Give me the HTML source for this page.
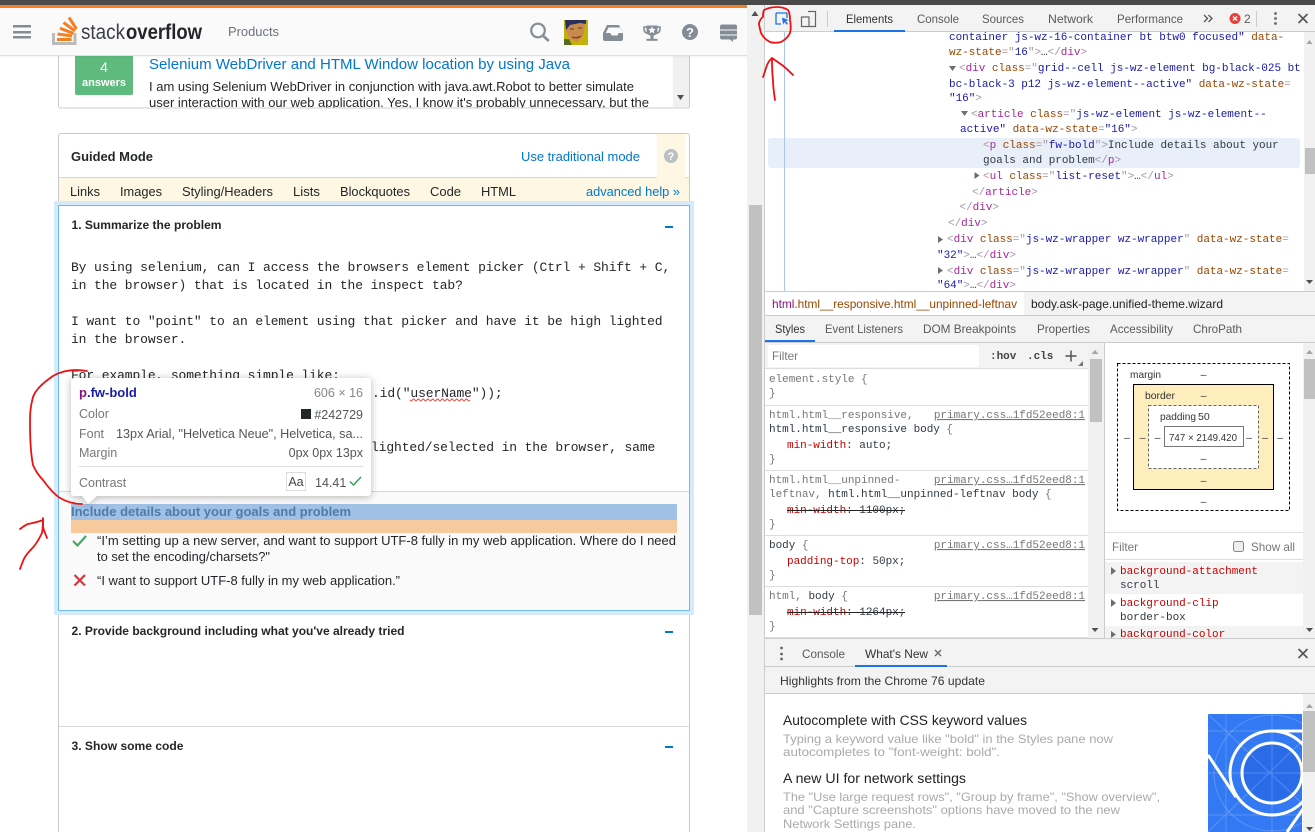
<!DOCTYPE html>
<html lang="en"><head><meta charset="utf-8"><title>Stack Overflow with DevTools</title>
<style>
html,body{margin:0;padding:0;background:#fff;width:1315px;height:832px;overflow:hidden}
svg{display:block}
text{font-family:"Liberation Sans",Arial,sans-serif;white-space:pre}
.m,.m13{font-family:"Liberation Mono","DejaVu Sans Mono",monospace}
.m{font-size:11px;fill:#303942;transform:translateY(-1px);letter-spacing:-.03px}
.m13{font-size:13px;fill:#242729;letter-spacing:-.12px}
.d{font-size:12px;fill:#5a5a5a}
.t{fill:#a6279a}.a{fill:#994500}.v{fill:#1a1aa6}.b{fill:#a894a6}
.g{fill:#777}.r{fill:#c80000}.l{fill:#777;text-decoration:underline}
.k{fill:#222}
.p{font-size:13px;fill:#3b4045}
.q{font-size:13px;fill:#6a737c}
.h{font-size:12px;fill:#aaa}
.hd{font-size:13.5px;fill:#222}
</style></head><body>
<svg xmlns="http://www.w3.org/2000/svg" width="1315" height="832" viewBox="0 0 1315 832">
<rect width="1315" height="832" fill="#fff"/>

<!-- LEFT PAGE: preview box -->
<rect x="58.500" y="40" width="631" height="68" rx="2" fill="#fff" stroke="#c8ccd0"/>
<rect x="673" y="55" width="16" height="52" fill="#f1f1f1"/>
<path d="M677 95h7l-3.500 5z" fill="#505050"/>
<rect x="75" y="50" width="58" height="45" rx="2" fill="#5eba7d"/>
<text x="104" y="72" font-size="14" fill="#fff" text-anchor="middle">4</text>
<text x="104" y="86" font-size="11" font-weight="bold" fill="#fff" text-anchor="middle">answers</text>
<text x="149" y="69" font-size="14.500" fill="#0077cc" textLength="421" lengthAdjust="spacingAndGlyphs">Selenium WebDriver and HTML Window location by using Java</text>
<text x="149" y="91" font-size="13" fill="#242729" textLength="485" lengthAdjust="spacingAndGlyphs">I am using Selenium WebDriver in conjunction with java.awt.Robot to better simulate</text>
<text x="149" y="107" font-size="13" fill="#242729" textLength="500" lengthAdjust="spacingAndGlyphs">user interaction with our web application. Yes, I know it's probably unnecessary, but the</text>
<rect x="59" y="108" width="630" height="4" fill="#fff"/>
<path d="M59 108H689" stroke="#c8ccd0"/>

<!-- Guided box -->
<rect x="58.500" y="133.500" width="631" height="720" rx="2" fill="#fff" stroke="#c8ccd0"/>
<rect x="657" y="134" width="28" height="44" fill="#fdf7e3"/>
<path d="M59 177.500H657M685 177.500H689" stroke="#d6d9dc"/>
<text x="71" y="161" font-size="13" font-weight="bold" fill="#242729" textLength="82" lengthAdjust="spacingAndGlyphs">Guided Mode</text>
<text x="521" y="161" font-size="13" fill="#0077cc" textLength="119" lengthAdjust="spacingAndGlyphs">Use traditional mode</text>
<circle cx="671" cy="156" r="7" fill="#bbc0c4"/>
<text x="671" y="160" font-size="11" font-weight="bold" fill="#fff" text-anchor="middle">?</text>
<rect x="59" y="178" width="630" height="24" fill="#fdf7e3"/>
<g font-size="13" fill="#242729">
<text x="70" y="196" textLength="30" lengthAdjust="spacingAndGlyphs">Links</text>
<text x="120" y="196" textLength="42" lengthAdjust="spacingAndGlyphs">Images</text>
<text x="182" y="196" textLength="91" lengthAdjust="spacingAndGlyphs">Styling/Headers</text>
<text x="293" y="196" textLength="27" lengthAdjust="spacingAndGlyphs">Lists</text>
<text x="340" y="196" textLength="70" lengthAdjust="spacingAndGlyphs">Blockquotes</text>
<text x="430" y="196" textLength="31" lengthAdjust="spacingAndGlyphs">Code</text>
<text x="481" y="196" textLength="35" lengthAdjust="spacingAndGlyphs">HTML</text>
</g>
<text x="586" y="196" font-size="13" fill="#0077cc" textLength="94" lengthAdjust="spacingAndGlyphs">advanced help »</text>

<!-- Focus section -->
<rect x="54" y="201" width="640" height="414" fill="#d6eafb"/>
<rect x="58.500" y="205.500" width="631" height="405" fill="#fff" stroke="#6bbbf7"/>
<text x="71.500" y="229" font-size="12" font-weight="bold" fill="#242729" textLength="150" lengthAdjust="spacingAndGlyphs">1. Summarize the problem</text>
<rect x="665" y="226" width="8" height="2" fill="#0077cc"/>
<g>
<text class="m13" x="71" y="271">By using selenium, can I access the browsers element picker (Ctrl + Shift + C,</text>
<text class="m13" x="71" y="289">in the browser) that is located in the inspect tab?</text>
<text class="m13" x="71" y="325">I want to "point" to an element using that picker and have it be high lighted</text>
<text class="m13" x="71" y="343">in the browser.</text>
<text class="m13" x="71" y="379">For example, something simple like:</text>
<text class="m13" x="372" y="397">.id("userName"));</text>
<text class="m13" x="371" y="451">lighted/selected in the browser, same</text>
</g>
<path d="M410 400q1.200 2 2.400 0t2.400 0 2.400 0 2.400 0 2.400 0 2.400 0 2.400 0 2.400 0 2.400 0 2.400 0 2.400 0 2.400 0 2.400 0 2.400 0 2.400 0 2.400 0 2.400 0 2.400 0 2.400 0 2.400 0 2.400 0 2.400 0 2.400 0 2.400 0 2.400 0" fill="none" stroke="#e0443e" stroke-width="1"/>

<!-- Lower active area -->
<rect x="59" y="491" width="630" height="119" fill="#fafafb"/>
<path d="M59 491.500H689" stroke="#d6d9dc"/>
<rect x="71" y="504" width="606" height="16" fill="#9fc1e6"/>
<rect x="71" y="520" width="606" height="13" fill="#f6ca9c"/>
<text x="71" y="516" font-size="13" font-weight="bold" fill="#4f7ba8" textLength="280" lengthAdjust="spacingAndGlyphs">Include details about your goals and problem</text>
<path d="M73 541l4.500 4.500L86 536" fill="none" stroke="#48a868" stroke-width="2.200"/>
<text x="97" y="545" font-size="13" fill="#242729" textLength="579" lengthAdjust="spacingAndGlyphs">“I’m setting up a new server, and want to support UTF-8 fully in my web application. Where do I need</text>
<text x="97" y="561" font-size="13" fill="#242729" textLength="173" lengthAdjust="spacingAndGlyphs">to set the encoding/charsets?"</text>
<path d="M74.500 575l10.500 10.500M85 575l-10.500 10.500" fill="none" stroke="#d1383d" stroke-width="2.200"/>
<text x="97" y="585" font-size="13" fill="#242729" textLength="303" lengthAdjust="spacingAndGlyphs">“I want to support UTF-8 fully in my web application.”</text>

<text x="71.500" y="635" font-size="12" font-weight="bold" fill="#242729" textLength="333" lengthAdjust="spacingAndGlyphs">2. Provide background including what you've already tried</text>
<rect x="665" y="631" width="8" height="2" fill="#0077cc"/>
<path d="M59 726.500H689" stroke="#d6d9dc"/>
<text x="71.500" y="750" font-size="12" font-weight="bold" fill="#242729" textLength="112" lengthAdjust="spacingAndGlyphs">3. Show some code</text>
<rect x="665" y="746" width="8" height="2" fill="#0077cc"/>

<!-- Tooltip -->
<g>
<g style="filter:drop-shadow(0 1px 4px rgba(0,0,0,.28))">
<path d="M74 378H368a3 3 0 0 1 3 3V493a3 3 0 0 1-3 3H97l-9 8-6-8H74a3 3 0 0 1-3-3V381a3 3 0 0 1 3-3z" fill="#fff"/>
</g>
<text x="79" y="397" font-size="13" font-weight="bold"><tspan fill="#881280">p</tspan><tspan fill="#1a1aa6">.fw-bold</tspan></text>
<text x="363" y="397" font-size="12.500" fill="#888" text-anchor="end">606 × 16</text>
<text x="79" y="418" font-size="12.500" fill="#777">Color</text>
<rect x="301" y="409" width="10" height="10" fill="#242729"/>
<text x="363" y="419" font-size="12.500" fill="#555" text-anchor="end">#242729</text>
<text x="79" y="438" font-size="12.500" fill="#777">Font</text>
<text x="116" y="438" font-size="12.500" fill="#555" textLength="247" lengthAdjust="spacingAndGlyphs">13px Arial, "Helvetica Neue", Helvetica, sa...</text>
<text x="79" y="457" font-size="12.500" fill="#777">Margin</text>
<text x="363" y="457" font-size="12.500" fill="#555" text-anchor="end">0px 0px 13px</text>
<path d="M79 466.500H363" stroke="#ddd"/>
<text x="79" y="487" font-size="12.500" fill="#777">Contrast</text>
<rect x="286.500" y="472.500" width="19" height="18" fill="#fff" stroke="#ddd"/>
<text x="296" y="486" font-size="12.500" fill="#444" text-anchor="middle">Aa</text>
<text x="315" y="487" font-size="12.500" fill="#555">14.41</text>
<path d="M350 481.500l3.500 3.500L361 477" fill="none" stroke="#1f9e3c" stroke-width="1.300"/>
</g>

<!-- Header -->
<rect x="0" y="8" width="747" height="47" fill="#fafafb"/>
<rect x="0" y="55" width="747" height="1" fill="#dcdee0"/>
<rect x="0" y="56" width="747" height="1.500" fill="#000" opacity=".03"/>
<rect x="0" y="5" width="747" height="3" fill="#f48024"/>
<g fill="#848d95"><rect x="13" y="25" width="18" height="2.500"/><rect x="13" y="31" width="18" height="2.500"/><rect x="13" y="36" width="18" height="2.500"/></g>
<path d="M53.500 33v10.500H75V33" fill="none" stroke="#bcbbbb" stroke-width="3"/>
<g stroke="#f48024" stroke-width="3" fill="none">
<path d="M57 39.500H71.500"/><path d="M57.500 34l14.500 2"/><path d="M60 28.200l13.500 5.300"/><path d="M63.500 22.500l11.500 8.500"/><path d="M69 17.500l7.500 11.500"/>
</g>
<text x="81" y="39" font-size="21" fill="#3c4146" textLength="44" lengthAdjust="spacingAndGlyphs">stack</text>
<text x="126" y="39" font-size="21" font-weight="bold" fill="#242729" textLength="76" lengthAdjust="spacingAndGlyphs">overflow</text>
<text x="228" y="36" font-size="13" fill="#6a737c" textLength="51" lengthAdjust="spacingAndGlyphs">Products</text>
<g fill="none" stroke="#848d95" stroke-width="2.200"><circle cx="538" cy="30.500" r="6.800"/><path d="M542.800 35.500l6 5.500" stroke-width="2.600"/></g>
<rect x="564" y="20" width="24" height="25" fill="#c4b10c"/>
<path d="M567 21h17l1 5-2 10-6 6-7-3-4-8z" fill="#c98a4e"/>
<path d="M565 20h21v4l-6-1-10 2-4 5z" fill="#27305c"/>
<path d="M572 37q5 2 9-1" stroke="#8a3a2d" stroke-width="1.300" fill="none"/>
<path d="M570 29h4M578 28h4" stroke="#5a3a20" stroke-width="1"/>
<path d="M564 39h5l3 6h-8z" fill="#5a6a20"/>
<path d="M607 25h12l4 8v6a2 2 0 0 1-2 2h-16a2 2 0 0 1-2-2v-6zM608.500 27.500l-2.700 5.500h4.400l1.500 2.500h5.600l1.500-2.500h4.400l-2.700-5.500z" fill="#848d95" fill-rule="evenodd"/>
<path d="M646.500 25.500h11v5c0 3-2.500 5.500-5.500 5.500s-5.500-2.500-5.500-5.500z" fill="#848d95"/>
<path d="M647 27h-3v2c0 2.800 2 4.500 4.500 4.500M657 27h3v2c0 2.800-2 4.500-4.500 4.500" fill="none" stroke="#848d95" stroke-width="1.600"/>
<rect x="650.500" y="36" width="3" height="3" fill="#848d95"/>
<rect x="646.500" y="38.800" width="11" height="2" fill="#848d95"/>
<path d="M652 26.500l1.100 2.300 2.500.3-1.800 1.800.5 2.500-2.300-1.300-2.300 1.300.5-2.500-1.800-1.800 2.500-.3z" fill="#fafafb"/>
<circle cx="690" cy="32" r="8" fill="#848d95"/>
<text x="690" y="37" font-size="13" font-weight="bold" fill="#fafafb" text-anchor="middle">?</text>
<path d="M722 24.500h13a2 2 0 0 1 2 2v3h-17v-3a2 2 0 0 1 2-2zM720 30.500h17v4h-17zM720 35.500h17v2a2 2 0 0 1-2 2h-2v2.500l-3-2.500h-8a2 2 0 0 1-2-2z" fill="#848d95"/>

<!-- Left scrollbar -->
<rect x="747" y="5" width="17" height="827" fill="#f1f1f1"/>
<path d="M751.500 16l3.500-5 3.500 5z" fill="#505050"/>
<rect x="749" y="205" width="13" height="410" fill="#c1c1c1"/>

<!-- Top dark strip -->
<rect x="0" y="0" width="1315" height="5" fill="#4a4a4a"/>

<!-- DEVTOOLS -->
<rect x="764" y="5" width="551" height="827" fill="#fff"/>
<path d="M764.500 5V832" stroke="#ccc"/>
<rect x="765" y="5" width="550" height="27" fill="#f3f3f3"/>
<path d="M765 31.500H1315" stroke="#ccc"/>
<path d="M776 13h11M776 13v11h5M787 13v5" fill="none" stroke="#1a73e8" stroke-width="1.300"/>
<path d="M782 17.500l6.500 2.500-2.700 1.100 2.200 2.600-1.200 1-2.200-2.600-1.500 2.400z" fill="#1a73e8"/>
<path d="M808 11.500h7.500v15h-7.500M801.500 17h7.500v9.500h-7.500z" fill="none" stroke="#666" stroke-width="1.200"/>
<path d="M827.500 11V27" stroke="#ccc"/>
<g>
<text class="d" x="846" y="23" textLength="47" lengthAdjust="spacingAndGlyphs" style="fill:#333">Elements</text>
<text class="d" x="917" y="23" textLength="42" lengthAdjust="spacingAndGlyphs">Console</text>
<text class="d" x="982" y="23" textLength="42" lengthAdjust="spacingAndGlyphs">Sources</text>
<text class="d" x="1048" y="23" textLength="45" lengthAdjust="spacingAndGlyphs">Network</text>
<text class="d" x="1117" y="23" textLength="66" lengthAdjust="spacingAndGlyphs">Performance</text>
</g>
<rect x="834" y="30" width="71" height="2" fill="#1a73e8"/>
<path d="M1204 15l3.500 3.500-3.500 3.500M1208.500 15l3.500 3.500-3.500 3.500" fill="none" stroke="#555" stroke-width="1.300"/>
<circle cx="1235" cy="18.500" r="5.500" fill="#e8413c"/>
<path d="M1233 16.500l4 4M1237 16.500l-4 4" stroke="#fff" stroke-width="1.300"/>
<text class="d" x="1244" y="23">2</text>
<path d="M1256.500 11V27" stroke="#ccc"/>
<g fill="#666"><circle cx="1275.500" cy="13.500" r="1.400"/><circle cx="1275.500" cy="18.500" r="1.400"/><circle cx="1275.500" cy="23.500" r="1.400"/></g>
<path d="M1298.500 14l9 9M1307.500 14l-9 9" stroke="#555" stroke-width="1.600"/>

<!-- Elements tree -->
<rect x="1304" y="32" width="11" height="260" fill="#f1f1f1"/>
<path d="M1306.500 44l3-4 3 4z" fill="#a3a3a3"/>
<rect x="1305" y="148" width="10" height="26" fill="#c1c1c1"/>
<path d="M1306 280h7l-3.500 4z" fill="#505050"/>
<path d="M784.500 32V292" stroke="#a8c7f0"/>
<rect x="768" y="138" width="532" height="30" rx="3" fill="#e8eff9"/>
<path d="M784.500 138V168" stroke="#a8c7f0"/>
<g>
<text class="m" x="949" y="41"><tspan class="v">container js-wz-16-container bt btw0 focused"</tspan><tspan class="a"> data-</tspan></text>
<text class="m" x="949" y="56"><tspan class="a">wz-state</tspan><tspan class="b">="</tspan><tspan class="v">16</tspan><tspan class="b">"&gt;</tspan>…<tspan class="b">&lt;/</tspan><tspan class="t">div</tspan><tspan class="b">&gt;</tspan></text>
<path d="M949 66h7l-3.500 5z" fill="#6e6e6e"/>
<text class="m" x="959" y="72"><tspan class="b">&lt;</tspan><tspan class="t">div</tspan> <tspan class="a">class</tspan><tspan class="b">="</tspan><tspan class="v">grid--cell js-wz-element bg-black-025 bt</tspan></text>
<text class="m" x="949" y="88"><tspan class="v">bc-black-3 p12 js-wz-element--active"</tspan> <tspan class="a">data-wz-state</tspan><tspan class="b">=</tspan></text>
<text class="m" x="949" y="102"><tspan class="v">"16"</tspan><tspan class="b">&gt;</tspan></text>
<path d="M961 111h7l-3.500 5z" fill="#6e6e6e"/>
<text class="m" x="971" y="118"><tspan class="b">&lt;</tspan><tspan class="t">article</tspan> <tspan class="a">class</tspan><tspan class="b">="</tspan><tspan class="v">js-wz-element js-wz-element--</tspan></text>
<text class="m" x="960" y="133"><tspan class="v">active"</tspan> <tspan class="a">data-wz-state</tspan><tspan class="b">=</tspan><tspan class="v">"16"</tspan><tspan class="b">&gt;</tspan></text>
<text class="m" x="983" y="149"><tspan class="b">&lt;</tspan><tspan class="t">p</tspan> <tspan class="a">class</tspan><tspan class="b">="</tspan><tspan class="v">fw-bold</tspan><tspan class="b">"&gt;</tspan>Include details about your</text>
<text class="m" x="983" y="164">goals and problem<tspan class="b">&lt;/</tspan><tspan class="t">p</tspan><tspan class="b">&gt;</tspan></text>
<path d="M974.500 172v7l5-3.500z" fill="#6e6e6e"/>
<text class="m" x="983" y="180"><tspan class="b">&lt;</tspan><tspan class="t">ul</tspan> <tspan class="a">class</tspan><tspan class="b">="</tspan><tspan class="v">list-reset</tspan><tspan class="b">"&gt;</tspan>…<tspan class="b">&lt;/</tspan><tspan class="t">ul</tspan><tspan class="b">&gt;</tspan></text>
<text class="m" x="972" y="196"><tspan class="b">&lt;/</tspan><tspan class="t">article</tspan><tspan class="b">&gt;</tspan></text>
<text class="m" x="959.500" y="211"><tspan class="b">&lt;/</tspan><tspan class="t">div</tspan><tspan class="b">&gt;</tspan></text>
<text class="m" x="948" y="227"><tspan class="b">&lt;/</tspan><tspan class="t">div</tspan><tspan class="b">&gt;</tspan></text>
<path d="M938 236v7l5-3.500z" fill="#6e6e6e"/>
<text class="m" x="947" y="243"><tspan class="b">&lt;</tspan><tspan class="t">div</tspan> <tspan class="a">class</tspan><tspan class="b">="</tspan><tspan class="v">js-wz-wrapper wz-wrapper</tspan><tspan class="b">"</tspan> <tspan class="a">data-wz-state</tspan><tspan class="b">=</tspan></text>
<text class="m" x="937" y="259"><tspan class="v">"32"</tspan><tspan class="b">&gt;</tspan>…<tspan class="b">&lt;/</tspan><tspan class="t">div</tspan><tspan class="b">&gt;</tspan></text>
<path d="M938 267v7l5-3.500z" fill="#6e6e6e"/>
<text class="m" x="947" y="275"><tspan class="b">&lt;</tspan><tspan class="t">div</tspan> <tspan class="a">class</tspan><tspan class="b">="</tspan><tspan class="v">js-wz-wrapper wz-wrapper</tspan><tspan class="b">"</tspan> <tspan class="a">data-wz-state</tspan><tspan class="b">=</tspan></text>
<text class="m" x="937" y="289"><tspan class="v">"64"</tspan><tspan class="b">&gt;</tspan>…<tspan class="b">&lt;/</tspan><tspan class="t">div</tspan><tspan class="b">&gt;</tspan></text>
</g>

<!-- Breadcrumbs -->
<rect x="765" y="292" width="550" height="23" fill="#f3f3f3"/>
<path d="M765 291.500H1315M765 315.500H1315" stroke="#ccc"/>
<rect x="765" y="292" width="259" height="23" fill="#fff"/>
<text x="772" y="308" font-size="12" textLength="245" lengthAdjust="spacingAndGlyphs"><tspan fill="#881280">html</tspan><tspan fill="#994500">.html__responsive.html__unpinned-leftnav</tspan></text>
<text x="1031" y="308" font-size="12" fill="#222" textLength="192" lengthAdjust="spacingAndGlyphs">body.ask-page.unified-theme.wizard</text>

<!-- Styles tabs -->
<rect x="765" y="316" width="550" height="26" fill="#f3f3f3"/>
<path d="M765 342.500H1315" stroke="#ccc"/>
<text class="d" x="775" y="333" textLength="30" lengthAdjust="spacingAndGlyphs" style="fill:#333">Styles</text>
<text class="d" x="825" y="333" textLength="78" lengthAdjust="spacingAndGlyphs">Event Listeners</text>
<text class="d" x="923" y="333" textLength="93" lengthAdjust="spacingAndGlyphs">DOM Breakpoints</text>
<text class="d" x="1037" y="333" textLength="53" lengthAdjust="spacingAndGlyphs">Properties</text>
<text class="d" x="1110" y="333" textLength="63" lengthAdjust="spacingAndGlyphs">Accessibility</text>
<text class="d" x="1193" y="333" textLength="49" lengthAdjust="spacingAndGlyphs">ChroPath</text>
<rect x="765" y="340" width="50" height="2" fill="#1a73e8"/>

<!-- Styles filter -->
<rect x="765" y="343" width="323" height="25" fill="#f3f3f3"/>
<path d="M765 368.500H1088" stroke="#ddd"/>
<rect x="768" y="345" width="211" height="22" fill="#fff"/>
<text x="772" y="360" font-size="12" fill="#777" textLength="26" lengthAdjust="spacingAndGlyphs">Filter</text>
<text x="990" y="360" font-weight="bold" class="m" style="fill:#444">:hov</text>
<text x="1027" y="360" font-weight="bold" class="m" style="fill:#444">.cls</text>
<path d="M1071 350.500v11M1065.500 356h11" stroke="#555" stroke-width="1.500"/>
<path d="M1083 361v5h-5z" fill="#777"/>
<text class="m" x="769" y="383" style="fill:#777">element.style {</text>
<text class="m" x="769" y="397" style="fill:#777">}</text>
<path d="M765 405.500H1088M765 470.500H1088M765 535.500H1088M765 586.500H1088M765 637.500H1315" stroke="#ddd"/>
<text class="m" x="769" y="419" style="fill:#777">html.html__responsive,</text>
<text class="m l" x="1085" y="419" text-anchor="end">primary.css…1fd52eed8:1</text>
<text class="m" x="769" y="433">html.html__responsive body <tspan class="g">{</tspan></text>
<text class="m" x="787" y="449"><tspan class="r">min-width</tspan>: auto;</text>
<text class="m" x="769" y="463" style="fill:#777">}</text>
<text class="m" x="769" y="484" style="fill:#777">html.html__unpinned-</text>
<text class="m l" x="1085" y="484" text-anchor="end">primary.css…1fd52eed8:1</text>
<text class="m" x="769" y="498"><tspan class="g">leftnav, </tspan>html.html__unpinned-leftnav body <tspan class="g">{</tspan></text>
<text class="m" x="787" y="514"><tspan class="r">min-width</tspan>: 1100px;</text>
<path d="M787 510.500H905" stroke="#222"/>
<text class="m" x="769" y="528" style="fill:#777">}</text>
<text class="m" x="769" y="549">body <tspan class="g">{</tspan></text>
<text class="m l" x="1085" y="549" text-anchor="end">primary.css…1fd52eed8:1</text>
<text class="m" x="787" y="565"><tspan class="r">padding-top</tspan>: 50px;</text>
<text class="m" x="769" y="579" style="fill:#777">}</text>
<text class="m" x="769" y="600"><tspan class="g">html, </tspan>body <tspan class="g">{</tspan></text>
<text class="m l" x="1085" y="600" text-anchor="end">primary.css…1fd52eed8:1</text>
<text class="m" x="787" y="616"><tspan class="r">min-width</tspan>: 1264px;</text>
<path d="M787 612.500H905" stroke="#222"/>
<text class="m" x="769" y="630" style="fill:#777">}</text>

<!-- Styles scrollbar and divider -->
<rect x="1088" y="343" width="16" height="295" fill="#f1f1f1"/>
<path d="M1091.500 354l3.500-4 3.500 4z" fill="#a3a3a3"/>
<rect x="1090" y="359" width="12" height="63" fill="#c1c1c1"/>
<path d="M1091.500 628h7l-3.500 4z" fill="#505050"/>
<path d="M1104.500 343V638" stroke="#ccc"/>

<!-- Box model -->
<rect x="1117.500" y="363.500" width="172" height="147" fill="#fff" stroke="#000" stroke-dasharray="3 2"/>
<rect x="1133.500" y="384.500" width="140" height="105" fill="#feedbd" stroke="#000"/>
<rect x="1148.500" y="405.500" width="110" height="63" fill="#fff" stroke="#666" stroke-dasharray="3 2"/>
<rect x="1164.500" y="426.500" width="79" height="20" fill="#fff" stroke="#777"/>
<g font-size="10.500" fill="#333">
<text x="1130" y="378" textLength="31" lengthAdjust="spacingAndGlyphs">margin</text>
<text x="1145" y="399" textLength="30" lengthAdjust="spacingAndGlyphs">border</text>
<text x="1160" y="420" textLength="36" lengthAdjust="spacingAndGlyphs">padding</text>
<text x="1198" y="420">50</text>
<text x="1169" y="441" textLength="68" lengthAdjust="spacingAndGlyphs">747 × 2149.420</text>
<text x="1203.500" y="378" text-anchor="middle">–</text>
<text x="1203.500" y="399" text-anchor="middle">–</text>
<text x="1203.500" y="462" text-anchor="middle">–</text>
<text x="1203.500" y="484" text-anchor="middle">–</text>
<text x="1203.500" y="505" text-anchor="middle">–</text>
<text x="1127" y="441" text-anchor="middle">–</text>
<text x="1142.500" y="441" text-anchor="middle">–</text>
<text x="1157.500" y="441" text-anchor="middle">–</text>
<text x="1249" y="441" text-anchor="middle">–</text>
<text x="1265" y="441" text-anchor="middle">–</text>
<text x="1280" y="441" text-anchor="middle">–</text>
</g>
<!-- Computed -->
<path d="M1105 532.500H1303M1105 559.500H1303" stroke="#ddd"/>
<text x="1112" y="551" font-size="12" fill="#777" textLength="26" lengthAdjust="spacingAndGlyphs">Filter</text>
<rect x="1233.500" y="541.500" width="10" height="10" rx="2" fill="#eee" stroke="#888"/>
<text x="1251" y="551" font-size="12" fill="#777" textLength="44" lengthAdjust="spacingAndGlyphs">Show all</text>
<rect x="1105" y="562" width="198" height="32" fill="#f3f3f3"/>
<rect x="1105" y="626" width="198" height="12" fill="#f3f3f3"/>
<path d="M1111 567v8l5-4zM1111 599v8l5-4zM1111 631v7l5-3.500z" fill="#6e6e6e"/>
<text class="m" x="1120" y="575" style="fill:#c80000">background-attachment</text>
<text class="m" x="1120" y="589">scroll</text>
<text class="m" x="1120" y="607" style="fill:#c80000">background-clip</text>
<text class="m" x="1120" y="621">border-box</text>
<text class="m" x="1120" y="638" style="fill:#c80000">background-color</text>
<rect x="1105" y="638" width="210" height="2" fill="#fff"/>
<rect x="1303" y="343" width="12" height="295" fill="#f1f1f1"/>
<path d="M1306 354l3.500-4 3.500 4z" fill="#a3a3a3"/>
<rect x="1304" y="359" width="11" height="40" fill="#c1c1c1"/>
<path d="M1306 628h7l-3.500 4z" fill="#505050"/>

<!-- Drawer -->
<rect x="765" y="639" width="550" height="55" fill="#f3f3f3"/>
<path d="M765 638.500H1315M765 666.500H1315M765 693.500H1315" stroke="#ccc"/>
<g fill="#666"><circle cx="781.500" cy="648" r="1.400"/><circle cx="781.500" cy="654" r="1.400"/><circle cx="781.500" cy="659" r="1.400"/></g>
<text class="d" x="802" y="658" textLength="43" lengthAdjust="spacingAndGlyphs">Console</text>
<text class="d" x="865" y="658" textLength="63" lengthAdjust="spacingAndGlyphs" style="fill:#333">What's New</text>
<path d="M935 650l6 6M941 650l-6 6" stroke="#666" stroke-width="1.400"/>
<rect x="855" y="665" width="92" height="2" fill="#1a73e8"/>
<path d="M1298.500 649l9 9M1307.500 649l-9 9" stroke="#555" stroke-width="1.600"/>
<text x="780" y="685" font-size="12" fill="#333" textLength="205" lengthAdjust="spacingAndGlyphs">Highlights from the Chrome 76 update</text>

<text class="hd" x="783" y="725" textLength="244" lengthAdjust="spacingAndGlyphs">Autocomplete with CSS keyword values</text>
<text class="h" x="783" y="743" textLength="330" lengthAdjust="spacingAndGlyphs">Typing a keyword value like "bold" in the Styles pane now</text>
<text class="h" x="783" y="756" textLength="217" lengthAdjust="spacingAndGlyphs">autocompletes to "font-weight: bold".</text>
<text class="hd" x="783" y="783" textLength="183" lengthAdjust="spacingAndGlyphs">A new UI for network settings</text>
<text class="h" x="783" y="801" textLength="377" lengthAdjust="spacingAndGlyphs">The "Use large request rows", "Group by frame", "Show overview",</text>
<text class="h" x="783" y="814" textLength="337" lengthAdjust="spacingAndGlyphs">and "Capture screenshots" options have moved to the new</text>
<text class="h" x="783" y="828" textLength="133" lengthAdjust="spacingAndGlyphs">Network Settings pane.</text>

<!-- What's new image -->
<svg x="1208" y="714" width="94" height="118" viewBox="1208 714 94 118">
<rect x="1208" y="714" width="94" height="118" fill="#3279f3"/>
<circle cx="1272" cy="773" r="30" fill="#2a6ce8"/>
<g fill="none" stroke="#fff" stroke-opacity=".2" stroke-width="1">
<circle cx="1272" cy="773" r="58"/>
<path d="M1208 731H1302M1208 815H1302M1226 714V832M1272 714V832M1208 773H1302M1208 714L1330 830M1330 714L1208 832"/>
</g>
<g fill="none" stroke="#fff" stroke-width="3">
<circle cx="1272" cy="773" r="30"/>
<circle cx="1272" cy="773" r="42"/>
<path d="M1272 731H1302M1208 755L1236 797M1303 809L1287 832"/>
</g>
</svg>
<rect x="1303" y="694" width="12" height="138" fill="#f1f1f1"/>
<path d="M1306 708l3.500-4 3.500 4z" fill="#a3a3a3"/>
<rect x="1303" y="711" width="12" height="61" fill="#c1c1c1"/>
<path d="M1306 827h7l-3.500 4z" fill="#505050"/>

<!-- Red annotations -->
<g fill="none" stroke="#ee1111" stroke-width="1.800" stroke-linecap="round" stroke-linejoin="round">
<path d="M87 371C75 369 63 370 53 376C43 383 36 389 33 397C30 408 30 415 30 423C30 440 31 455 33 465C36 472 39 476 43 480C48 487 54 494 60 498C67 502 75 504 82 504"/>
<path d="M20 569C22 564 23 560 25 557C28 552 32 549 35 545C38 541 40 537 42 533C43 528 43 523 43 518"/>
<path d="M20 529C23 527 25 525 28 524C33 523 38 522 43 520M43 520C43 523 43 525 43 527C44 531 46 535 47 538"/>
<path d="M763 17C763 14 763 12 764 10C768 8 773 7 777 7C781 7 785 8 788 10C790 13 790 17 790 20C791 25 791 29 790 33C788 37 785 40 781 42C777 43 773 43 770 42C766 40 763 37 761 33C760 29 759 26 759 23C760 20 761 18 763 17Z"/>
<path d="M775 100C774 93 773 87 773 80C772 73 772 65 772 58"/>
<path d="M763 77C765 72 766 67 768 63C769 61 771 59 772 58C775 60 779 63 782 65C786 68 790 72 793 75"/>
</g>
</svg>
</body></html>
